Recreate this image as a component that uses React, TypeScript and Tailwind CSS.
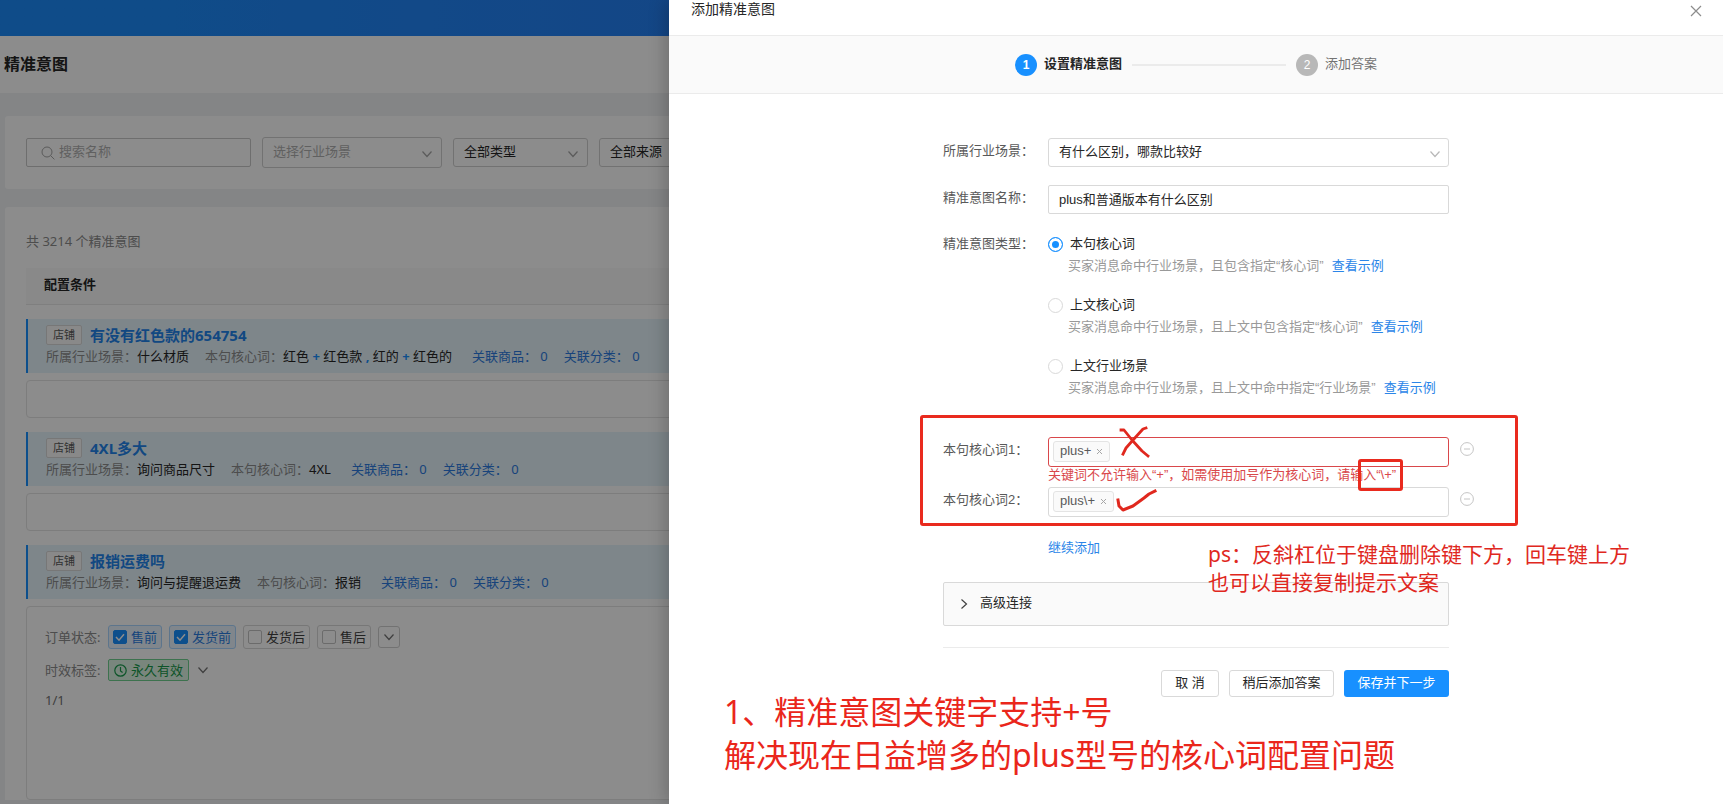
import { useState, type ReactNode } from "react";

const PAGE_FONT = "font-['Noto_Sans','Noto_Sans_CJK_SC',sans-serif]";
const FORM_FONT = "font-['Liberation_Sans','Noto_Sans_CJK_SC',sans-serif]";

function ChevronDown({ className = "" }: { className?: string }) {
  return (
    <svg className={`h-[10px] w-[10px] ${className}`} viewBox="0 0 10 10" fill="none" stroke="currentColor" aria-hidden="true">
      <path strokeWidth={1.2} d="M0.5 2.5L5 7.5L9.5 2.5" />
    </svg>
  );
}

function SearchIcon() {
  return (
    <svg className="h-[14px] w-[14px] shrink-0 text-[#a6a6a6]" viewBox="0 0 14 14" fill="none" stroke="currentColor" aria-hidden="true">
      <circle cx="6" cy="6" r="5" />
      <path d="M9.6 9.6L13.4 13.4" />
    </svg>
  );
}

function ClockIcon() {
  return (
    <svg className="h-[13px] w-[13px]" viewBox="0 0 13 13" fill="none" stroke="currentColor" strokeWidth={1.2} aria-hidden="true">
      <circle cx="6.5" cy="6.5" r="5.7" />
      <path d="M6.5 3V7L8.6 8.6" />
    </svg>
  );
}

function FilterSelect({ label, text, className }: { label: string; text: string; className: string }) {
  return (
    <div className={`relative shrink-0 ${className}`}>
      <select
        aria-label={label}
        className="h-full w-full appearance-none rounded-[3px] border border-[#d0d0d0] bg-white pr-6 pb-[2px] pl-[10px] text-[13px]"
      >
        <option>{text}</option>
      </select>
      <ChevronDown className="pointer-events-none absolute top-1/2 right-[10px] -mt-1 text-[#a6a6a6]" />
    </div>
  );
}

interface Intent {
  title: string;
  scene: string;
  words: ReactNode;
}

const Plus = () => <span className="font-bold text-[#1890ff]"> + </span>;

const INTENTS: Intent[] = [
  {
    title: "有没有红色款的654754",
    scene: "什么材质",
    words: (
      <>
        红色
        <Plus />
        红色款
        <span className="font-bold text-[#1890ff]"> , </span>
        红的
        <Plus />
        红色的
      </>
    ),
  },
  { title: "4XL多大", scene: "询问商品尺寸", words: "4XL" },
  { title: "报销运费吗", scene: "询问与提醒退运费", words: "报销" },
];

const ORDER_STATES = [
  { name: "售前", on: true },
  { name: "发货前", on: true },
  { name: "发货后", on: false },
  { name: "售后", on: false },
];

function IntentRow({ intent }: { intent: Intent }) {
  return (
    <div className="h-[54px] border-l-2 border-[#1890ff] bg-[#e6f4fc] pt-[6px] pl-[18px]">
      <div className="flex h-5 items-center gap-2">
        <span className="flex h-5 w-9 items-center justify-center rounded-[2px] border border-[#d9d9d9] bg-[#fafafa] text-[11px] text-[#595959]">
          店铺
        </span>
        <a href="#" className="text-[15px] leading-5 font-bold text-[#2284ec]">{intent.title}</a>
      </div>
      <div className="mt-[1px] flex gap-4 text-[13px] leading-5 whitespace-nowrap">
        <span>
          <span className="text-[#8c8c8c]">所属行业场景：</span>
          {intent.scene}
        </span>
        <span className="whitespace-pre">
          <span className="text-[#8c8c8c]">本句核心词：</span>
          {intent.words}
        </span>
        <a href="#" className="ml-1 text-[#2c7be0]">关联商品： 0</a>
        <a href="#" className="text-[#2c7be0]">关联分类： 0</a>
      </div>
    </div>
  );
}

function OrderState({ name, on }: { name: string; on: boolean }) {
  const [checked, setChecked] = useState(on);
  return (
    <label
      className={`flex h-6 items-center gap-1 rounded-[3px] border px-1 ${
        checked ? "border-[#a9d6ff] bg-[#e9f4ff] text-[#2b7de1]" : "border-[#d9d9d9] text-[#404040]"
      }`}
    >
      <span className="relative flex">
        <input
          type="checkbox"
          checked={checked}
          onChange={(e) => setChecked(e.target.checked)}
          className="h-[14px] w-[14px] appearance-none rounded-[2px] border border-[#c4c4c4] bg-white checked:border-[#1890ff] checked:bg-[#1890ff]"
        />
        {checked && (
          <svg className="pointer-events-none absolute inset-0 h-[14px] w-[14px]" viewBox="0 0 14 14" fill="none" stroke="#fff" strokeWidth={1.5}>
            <path d="M3 7L6 10.2L11 4.2" />
          </svg>
        )}
      </span>
      {name}
    </label>
  );
}

function IntentList() {
  return (
    <div className={`min-h-screen bg-[#f0f2f5] text-[#262626] ${PAGE_FONT}`}>
      <div className="h-9 bg-linear-to-r from-[#1d8af9] from-10% to-[#2580f5] to-40%" />
      <header className="flex h-[57px] items-center bg-white pb-[2px] pl-1">
        <h1 className="text-[16px] font-bold">精准意图</h1>
      </header>

      <section className="mt-[23px] ml-[5px] flex items-center gap-[11px] rounded-[3px] bg-white px-[21px] py-[21px]">
        <div className="flex h-[29px] w-[225px] shrink-0 items-center gap-1 rounded-[2px] border border-[#c8c8c8] pl-[14px]">
          <SearchIcon />
          <input
            aria-label="搜索名称"
            placeholder="搜索名称"
            className="min-w-0 flex-1 pb-[2px] text-[13px] outline-none placeholder:text-[#b0b0b0]"
          />
        </div>
        <FilterSelect label="行业场景" text="选择行业场景" className="h-[31px] w-[180px] text-[#b0b0b0]" />
        <FilterSelect label="类型" text="全部类型" className="h-[29px] w-[135px]" />
        <FilterSelect label="来源" text="全部来源" className="h-[29px] w-[135px]" />
      </section>

      <section className="mt-[18px] ml-[5px] rounded-t-[3px] bg-white px-[21px] pt-6">
        <p className="text-[13px] leading-5 text-[#8c8c8c]">共 3214 个精准意图</p>
        <h2 className="mt-[17px] flex h-[37px] items-center border-b border-[#e8e8e8] bg-[#fafafa] pb-[2px] pl-[18px] text-[13px] font-bold">
          配置条件
        </h2>
        {INTENTS.map((intent, i) => (
          <div key={intent.title} className="mt-[14px]">
            <IntentRow intent={intent} />
            {i < INTENTS.length - 1 ? (
              <div className="mt-[7px] h-[38px] rounded-[4px] border border-[#e4e4e4]" />
            ) : (
              <div className="mt-[7px] min-h-[194px] rounded-[4px] border border-[#e4e4e4] pt-[18px] pl-[18px] text-[13px] leading-5">
                <div className="flex items-center gap-[7px]">
                  <span className="w-14 shrink-0 whitespace-nowrap text-[#8c8c8c]">订单状态:</span>
                  {ORDER_STATES.map((state) => (
                    <OrderState key={state.name} {...state} />
                  ))}
                  <button aria-label="更多状态" className="flex h-[22px] w-[22px] items-center justify-center rounded-[3px] border border-[#d0d0d0] text-[#737373]">
                    <ChevronDown />
                  </button>
                </div>
                <div className="mt-[10px] flex items-center gap-[7px]">
                  <span className="w-14 shrink-0 whitespace-nowrap text-[#8c8c8c]">时效标签:</span>
                  <span className="flex h-[22px] items-center gap-1 rounded-[2px] border border-[#6fd08f] bg-[#dcf5e4] px-[5px] text-[#17994a]">
                    <ClockIcon />
                    永久有效
                  </span>
                  <button aria-label="更多时效" className="ml-[2px] text-[#737373]">
                    <ChevronDown />
                  </button>
                </div>
                <p className="mt-[9px] text-[#737373]">1/1</p>
              </div>
            )}
          </div>
        ))}
      </section>
    </div>
  );
}

const INTENT_TYPES = [
  { name: "本句核心词", hint: "买家消息命中行业场景，且包含指定“核心词”" },
  { name: "上文核心词", hint: "买家消息命中行业场景，且上文中包含指定“核心词”" },
  { name: "上文行业场景", hint: "买家消息命中行业场景，且上文中命中指定“行业场景”" },
];

function KeywordField({ id, label, tag, error = false }: { id: string; label: string; tag: string; error?: boolean }) {
  return (
    <div className="-mr-[25px] flex items-start">
      <label htmlFor={id} className="w-[105px] shrink-0 leading-[26px] text-[#595959]">{label}</label>
      <div className={`flex h-[30px] flex-1 items-center rounded-[3px] border px-1 pb-[2px] ${error ? "border-[#d9484b]" : "border-[#d9d9d9]"}`}>
        <span className="flex h-[21px] items-center gap-[5px] rounded-[3px] border border-[#e4e4e4] bg-[#fafafa] px-[6px] text-[#595959]">
          {tag}
          <button aria-label={`删除 ${tag}`} className="text-[#a6a6a6]">
            <svg className="h-[7px] w-[7px]" viewBox="0 0 7 7" fill="none" stroke="currentColor">
              <path d="M1 1L6 6M6 1L1 6" />
            </svg>
          </button>
        </span>
        <input id={id} className="min-w-0 flex-1 outline-none" />
      </div>
      <button aria-label={`移除${label}`} className="mt-[5px] ml-[11px] text-[#c4c4c4]">
        <svg className="h-[14px] w-[14px]" viewBox="0 0 14 14" fill="none" stroke="currentColor">
          <circle cx="7" cy="7" r="6.4" />
          <path d="M4 7H10" />
        </svg>
      </button>
    </div>
  );
}

// red mark-up drawn over the keyword rows
function KeywordMarks() {
  return (
    <div className="pointer-events-none">
      <div className="absolute -top-[22px] -right-[69px] -bottom-[9px] -left-[23px] rounded-[3px] border-3 border-[#e92a1e]" />
      <div className="absolute top-[22px] left-[415px] h-[32px] w-[45px] rounded-[3px] border-3 border-[#e92a1e]" />
      <svg className="absolute -top-[11px] left-[175px] h-[32px] w-[33px]" viewBox="0 0 33 32" fill="none" stroke="#e0281e" strokeWidth={2.8} strokeLinecap="square" strokeLinejoin="round">
        <path d="M3 4L6 4L14 14L24 25L30 30M28 2L25 3L15 14L8 22L5 28" />
      </svg>
      <svg className="absolute top-[51px] left-[172px] h-[25px] w-[44px]" viewBox="0 0 44 25" fill="none" stroke="#e0281e" strokeWidth={3} strokeLinecap="square" strokeLinejoin="round">
        <path d="M3 12L4 18L8 22L18 18L29 10L34 6L40 3" />
      </svg>
    </div>
  );
}

function Steps() {
  return (
    <ol className="flex h-[58px] items-center justify-center border-b border-[#ebebeb] bg-[#fafafa] text-[13px]">
      <li className="flex items-center">
        <span className="mr-[7px] flex h-[22px] w-[22px] items-center justify-center rounded-full bg-[#1890ff] text-[12px] font-bold text-white">1</span>
        <span className="pb-[2px] font-bold text-[#262626]">设置精准意图</span>
      </li>
      <li aria-hidden="true" className="mx-[10px] h-[2px] w-[154px] bg-[#ebebeb]" />
      <li className="flex items-center">
        <span className="mr-[7px] flex h-[22px] w-[22px] items-center justify-center rounded-full bg-[#b8b8b8] text-[12px] text-white">2</span>
        <span className="pb-[2px] text-[#737373]">添加答案</span>
      </li>
    </ol>
  );
}

function IntentDrawer() {
  const [type, setType] = useState(INTENT_TYPES[0].name);

  return (
    <aside className={`absolute inset-y-0 right-0 w-[1054px] max-w-full bg-white text-[13px] text-[#262626] shadow-[-4px_0_16px_rgba(0,0,0,0.2)] ${FORM_FONT}`}>
      <header className="flex h-9 items-start justify-between border-b border-[#ebebeb] pr-[21px] pl-[22px]">
        <h2 className="text-[14px] leading-[18px]">添加精准意图</h2>
        <button aria-label="关闭" className="mt-[5px] text-[#8c8c8c]">
          <svg className="h-[12px] w-[12px]" viewBox="0 0 12 12" fill="none" stroke="currentColor" strokeWidth={1.2}>
            <path d="M1 1L11 11M11 1L1 11" />
          </svg>
        </button>
      </header>
      <Steps />

      <form className="mx-auto w-[506px] pt-[44px]" onSubmit={(e) => e.preventDefault()}>
        <div className="flex">
          <label htmlFor="scene" className="w-[105px] shrink-0 leading-[26px] text-[#595959]">所属行业场景：</label>
          <div className="relative flex-1">
            <select id="scene" className="h-[29px] w-full appearance-none rounded-[3px] border border-[#d9d9d9] bg-white pr-6 pb-[2px] pl-[10px]">
              <option>有什么区别，哪款比较好</option>
            </select>
            <ChevronDown className="pointer-events-none absolute top-[11px] right-[9px] text-[#b8b8b8]" />
          </div>
        </div>
        <div className="mt-[18px] flex">
          <label htmlFor="name" className="w-[105px] shrink-0 leading-[26px] text-[#595959]">精准意图名称：</label>
          <input id="name" defaultValue="plus和普通版本有什么区别" className="h-[29px] min-w-0 flex-1 rounded-[2px] border border-[#d9d9d9] px-[10px] pb-[2px] outline-none" />
        </div>
        <fieldset className="mt-5 flex">
          <legend className="float-left w-[105px] shrink-0 leading-5 text-[#595959]">精准意图类型：</legend>
          <div className="flex flex-1 flex-col gap-[19px] leading-5">
            {INTENT_TYPES.map(({ name, hint }) => (
              <div key={name}>
                <label className="flex items-center gap-[7px]">
                  <input
                    type="radio"
                    name="intent-type"
                    checked={type === name}
                    onChange={() => setType(name)}
                    className="h-[15px] w-[15px] appearance-none rounded-full border border-[#d9d9d9] bg-white checked:border-[#1890ff] checked:bg-[#1890ff] checked:shadow-[inset_0_0_0_3px_#fff]"
                  />
                  {name}
                </label>
                <p className="mt-[2px] pl-5 whitespace-nowrap text-[#999999]">
                  {hint}
                  <a href="#" className="ml-2 text-[#2b85e8]">查看示例</a>
                </p>
              </div>
            ))}
          </div>
        </fieldset>

        <div className="relative mt-[39px]">
          <KeywordField id="word1" label="本句核心词1：" tag="plus+" error />
          <p className="mb-1 ml-[105px] leading-4 whitespace-nowrap text-[#d9484b]">
            关键词不允许输入“+”，如需使用加号作为核心词，请输入“\+”
          </p>
          <KeywordField id="word2" label="本句核心词2：" tag="plus\+" />
          <KeywordMarks />
        </div>
        <a href="#" className="mt-[21px] ml-[105px] block leading-5 text-[#2b85e8]">继续添加</a>

        <button type="button" className="mt-6 flex h-[44px] w-full items-center gap-3 rounded-[2px] border border-[#d9d9d9] bg-[#fafafa] pl-4">
          <svg className="h-[10px] w-[8px]" viewBox="0 0 8 10" fill="none" stroke="#404040" strokeWidth={1.2}>
            <path d="M1.5 0.5L6.5 5L1.5 9.5" />
          </svg>
          <span className="pb-[2px]">高级连接</span>
        </button>
        <hr className="mt-[21px] border-[#ebebeb]" />
        <div className="mt-[22px] flex justify-end gap-[10px]">
          <button type="button" className="h-[27px] w-[58px] rounded-[3px] border border-[#d9d9d9] pb-[2px]">取 消</button>
          <button type="button" className="h-[27px] w-[105px] rounded-[3px] border border-[#d9d9d9] pb-[2px]">稍后添加答案</button>
          <button type="submit" className="h-[27px] w-[105px] rounded-[3px] bg-[#1890ff] pb-[2px] text-white">保存并下一步</button>
        </div>
      </form>

      <p className={`absolute top-[540px] left-[539px] text-[21px] leading-7 whitespace-nowrap text-[#e0281e] ${PAGE_FONT}`}>
        ps：反斜杠位于键盘删除键下方，回车键上方
        <br />
        也可以直接复制提示文案
      </p>
      <p className={`absolute top-[690px] left-[55px] text-[32px] leading-[43px] whitespace-nowrap text-[#ea261b] ${PAGE_FONT}`}>
        1、精准意图关键字支持+号
        <br />
        解决现在日益增多的plus型号的核心词配置问题
      </p>
    </aside>
  );
}

export default function App() {
  return (
    <div className="relative min-h-screen overflow-hidden">
      <IntentList />
      <div className="absolute inset-0 bg-black/45" />
      <IntentDrawer />
    </div>
  );
}
